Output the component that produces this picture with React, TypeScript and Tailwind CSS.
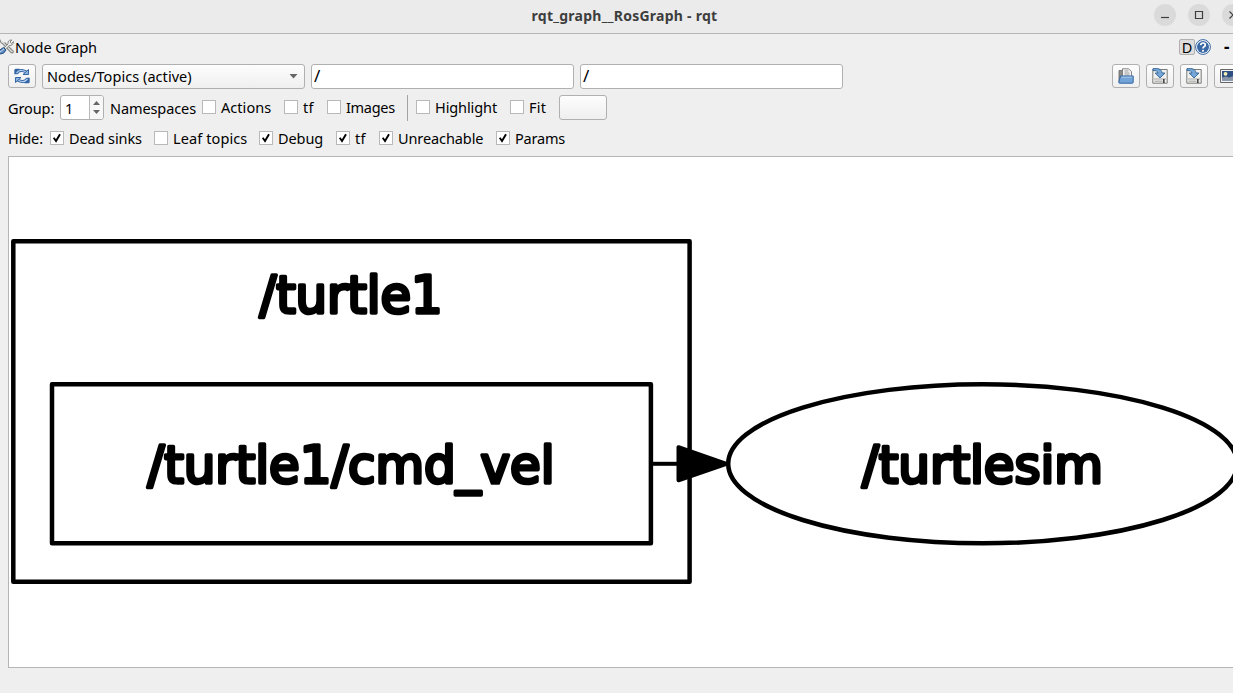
import clsx from "clsx";
import type { ReactNode } from "react";

function RefreshIcon() {
  return (
    <svg width="16" height="16" viewBox="0 0 16 16">
      <g fill="none" strokeLinejoin="round">
        <path d="M1.800 6.200V2.200H5.500M2.500 5.500Q4.500 2 8 2.500T13 4.500" stroke="#3465a4" strokeWidth="3" />
        <path d="M14.200 9.800V13.800H10.500M13.500 10.500Q11.500 14 8 13.500T3 11.500" stroke="#3465a4" strokeWidth="3" />
        <path d="M2.500 5Q5 2 8 2.500T13 4.500M13.500 11Q11 14 8 13.500T3 11.500" stroke="#b4d0ee" strokeWidth="1.200" />
        <path d="M9 6.500H14.500V1.500zM7 9.500H1.500V14.500z" fill="#8eb5df" stroke="#3465a4" />
      </g>
    </svg>
  );
}

function FolderIcon() {
  return (
    <svg width="16" height="16" viewBox="0 0 16 16">
      <path d="M1 14V2.500h4L6 4v10z" fill="#8a8d88" stroke="#666" strokeWidth=".8" />
      <path d="M4.500 9V.8h6L13.500 3.500V9z" fill="#f4f4f4" stroke="#777" strokeWidth=".9" />
      <path d="M6.500 3h4M6.500 5h5M6.500 7h5" stroke="#999" />
      <path d="M2.500 8h12.700v6.200q0 1-1 1H1.500q-.8 0-.7-1z" fill="#72a4d8" stroke="#3465a4" />
      <path d="M3.300 9.200h11" stroke="#a7c9ea" />
    </svg>
  );
}

function SaveIcon() {
  return (
    <svg width="16" height="16" viewBox="0 0 16 16">
      <path d="M.8 1.500h14.400v13.700H.8z" fill="#f1f1f0" stroke="#7a7c79" />
      <path d="M2 10.500h12v1H2z" fill="#a5a6a3" />
      <path d="M2.500 12.500h8v1.500h-8z" fill="#babdb6" />
      <path d="M11.200 11h1.300v4h-1.300z" fill="#222" />
      <path d="M1 .600C6 0 9.500 1 10 5h3L8 10 3.200 5H6C5.600 3 4 2.400 1 2.600z" fill="#75a7d8" stroke="#2f6193" strokeWidth=".9" strokeLinejoin="round" />
    </svg>
  );
}

function ImageIcon() {
  return (
    <svg width="16" height="16" viewBox="0 0 16 16">
      <path d="M.5 1.500h15v13H.5z" fill="#f3f3f3" stroke="#666" />
      <path d="M2 3h12v9.500H2z" fill="#2f4e82" />
      <path d="M2 9.500l4-1 3 1 5-1.500v4.500H2z" fill="#8795a6" />
      <circle cx="5.500" cy="5.800" r="1.900" fill="#f3efb2" />
    </svg>
  );
}

function ToolsIcon() {
  return (
    <svg width="14" height="16" viewBox="0 0 14 16" className="shrink-0">
      <path d="M0 .5q0 3 2.500 4L10.500 13q1.500 1.500 2.500.5T12 11L4.500 3.500" fill="#e6e6e6" stroke="#888a85" strokeWidth="1.100" />
      <path d="M13.500 2.500L11.500 4.500 10 3l2-2Q9 .5 8 3L8 5 3.500 9.500l1.300 1.300L9.300 6.500Q13 7 13.500 2.500z" fill="#eee" stroke="#888a85" />
      <path d="M-1 15V11.500L3.500 8.500 6 11Q4 15.500 0 15z" fill="#5c8ac0" stroke="#264f82" />
      <path d="M0 13l4-3" stroke="#c8dbef" />
    </svg>
  );
}

function HelpIcon() {
  return (
    <svg width="16" height="16" viewBox="0 0 16 16">
      <circle cx="8" cy="8" r="7.400" fill="#fff" stroke="#3465a4" />
      <circle cx="8" cy="8" r="6" fill="#3b69a5" />
      <path d="M5.700 6.100Q5.900 4 8.100 4q2.200 0 2.200 1.900Q10.300 7 9 7.700 8 8.300 8 9.500" fill="none" stroke="#fff" strokeWidth="1.700" />
      <circle cx="8" cy="11.800" r="1.050" fill="#fff" />
    </svg>
  );
}

function ToolButton({ children, className }: { children?: ReactNode; className?: string }) {
  return (
    <button
      className={clsx(
        "flex shrink-0 items-center justify-center rounded-[3px] border border-[#b0b0b0] bg-linear-to-b from-[#fdfdfd] to-[#efefef]",
        className ?? "h-6 w-7"
      )}
    >
      {children}
    </button>
  );
}

function CheckBox({ label, checked, className, text }: { label: string; checked?: boolean; className: string; text?: string }) {
  return (
    <label className={clsx("flex shrink-0 items-center gap-[5px]", className)}>
      <span className="flex h-3.5 w-3.5 shrink-0 items-center justify-center border border-[#b9b9b9] bg-white">
        {checked && (
          <svg width="10" height="10" viewBox="0 0 10 10" fill="none" stroke="#000" strokeWidth="1.900">
            <path d="M1.700 4.800L4 8 8 1.200" />
          </svg>
        )}
      </span>
      <span className={clsx("whitespace-nowrap", text)}>{label}</span>
    </label>
  );
}

function WindowButton({ children }: { children: ReactNode }) {
  return (
    <div className="flex h-[22px] w-[22px] shrink-0 items-center justify-center rounded-full bg-[#dadada]">
      <svg width="10" height="10" viewBox="0 0 10 10" fill="none" stroke="#3d3d3d" strokeWidth="1.200">
        {children}
      </svg>
    </div>
  );
}

function Graph() {
  return (
    <svg width="1224" height="510" viewBox="9 157 1224 510" className="block">
      <g fill="none" stroke="#000" strokeWidth="4.500" strokeLinejoin="round">
        <rect x="13.300" y="241.200" width="676.300" height="340.500" />
        <rect x="52" y="384.300" width="598.900" height="158.900" />
        <ellipse cx="982.700" cy="463.800" rx="254.500" ry="79.500" />
        <path d="M653 463.800H677" strokeWidth="4" />
        <path d="M678.500 447.200V480.300L726.500 463.800z" fill="#000" strokeWidth="4" />
      </g>
      <g
        fill="#000"
        stroke="#000"
        strokeWidth="3.600"
        strokeLinejoin="round"
        className="font-['DejaVu_Sans',sans-serif] text-[51px]"
      >
        <text x="259.500" y="312.500" textLength="183" lengthAdjust="spacingAndGlyphs">/turtle1</text>
        <text x="147.500" y="482.500" textLength="407" lengthAdjust="spacingAndGlyphs">/turtle1/cmd_vel</text>
        <text x="862" y="482.500" textLength="241" lengthAdjust="spacingAndGlyphs">/turtlesim</text>
      </g>
    </svg>
  );
}

export default function App() {
  return (
    <div className="flex h-[693px] w-[1233px] flex-col overflow-hidden bg-[#efefef] font-['Noto_Sans',sans-serif] text-[14.5px] leading-5 tracking-[-0.1px] text-black">
      {/* Title bar */}
      <div className="grid h-[34px] shrink-0 grid-cols-[1fr_250px_1fr] items-center border-b border-[#b6b6b6] bg-[#ebebeb] pb-[3px]">
        <div />
        <h1 className="pt-0.5 pl-4 text-[14px] font-bold tracking-[0.26px] whitespace-nowrap text-[#3d3d3d] text-center">
          rqt_graph__RosGraph - rqt
        </h1>
        <div className="flex justify-end gap-3 overflow-hidden">
          <WindowButton>
            <path d="M1 7.500H9" />
          </WindowButton>
          <WindowButton>
            <path d="M1.500 1.500h7v7h-7z" />
          </WindowButton>
          <div className="-mr-[11px] flex">
            <WindowButton>
              <path d="M1.500 1.500l7 7M8.500 1.500l-7 7" />
            </WindowButton>
          </div>
        </div>
      </div>

      {/* Dock title */}
      <div className="flex h-[26px] shrink-0 items-center">
        <ToolsIcon />
        <span className="ml-px">Node Graph</span>
        <div className="ml-auto flex items-center">
          <span className="flex h-4 w-4 items-center justify-center rounded-[2px] border border-[#b0b0b0] bg-[#dedede]">D</span>
          <HelpIcon />
          <span className="ml-[13px] w-[9px] text-[17px] font-bold">-</span>
        </div>
      </div>

      {/* Toolbar */}
      <div className="flex h-8 shrink-0 items-start pt-1 pl-2">
        <ToolButton>
          <RefreshIcon />
        </ToolButton>
        <div className="ml-1.5 flex h-[25px] w-[263px] shrink-0 items-center justify-between rounded-[3px] border border-[#b0b0b0] bg-linear-to-b from-[#fdfdfd] to-[#efefef] pr-1.5 pl-1">
          <span className="pb-0.5 tracking-[0.05px]">Nodes/Topics (active)</span>
          <svg width="9" height="5" viewBox="0 0 9 5">
            <path d="M.5 0h8L4.500 4.500z" fill="#666" />
          </svg>
        </div>
        <div className="ml-1.5 flex h-[25px] w-[263px] items-center rounded-[3px] border border-[#b0b0b0] bg-white pb-0.5 pl-0.5 text-[17px]">/</div>
        <div className="ml-1.5 flex h-[25px] w-[263px] items-center rounded-[3px] border border-[#b0b0b0] bg-white pb-0.5 pl-0.5 text-[17px]">/</div>
        <div className="-mr-[9px] ml-auto flex shrink-0 gap-1.5">
          <ToolButton>
            <FolderIcon />
          </ToolButton>
          <ToolButton>
            <SaveIcon />
          </ToolButton>
          <ToolButton>
            <SaveIcon />
          </ToolButton>
          <ToolButton>
            <ImageIcon />
          </ToolButton>
        </div>
      </div>

      {/* Grouping options */}
      <div className="flex h-[31px] shrink-0 items-center pl-2">
        <span className="w-[52px] shrink-0">Group:</span>
        <div className="flex h-[25px] w-11 shrink-0 overflow-hidden rounded-[3px] border border-[#b0b0b0] bg-white">
          <span className="flex-1 pt-0.5 pl-1">1</span>
          <span className="flex w-3.5 flex-col items-center justify-center gap-[5px] border-l border-[#b9b9b9] bg-[#f7f7f7]">
            <svg width="7" height="4" viewBox="0 0 7 4">
              <path d="M0 4H7L3.500 0z" fill="#666" />
            </svg>
            <svg width="7" height="4" viewBox="0 0 7 4">
              <path d="M0 0H7L3.500 4z" fill="#666" />
            </svg>
          </span>
        </div>
        <span className="ml-1.5 w-[92px] shrink-0">Namespaces</span>
        <div className="flex shrink-0 pb-[2px]">
          <CheckBox label="Actions" className="w-[82px]" text="tracking-[0.05px]" />
          <CheckBox label="tf" className="w-[43px]" text="tracking-[0.3px]" />
          <CheckBox label="Images" className="w-20" text="tracking-[-0.3px]" />
        </div>
        <div className="mr-2 h-[26px] w-px bg-[#a3a3a3]" />
        <div className="flex shrink-0 pb-[2px]">
          <CheckBox label="Highlight" className="w-[94px]" />
          <CheckBox label="Fit" className="w-[49px]" text="tracking-[0.3px]" />
        </div>
        <ToolButton className="h-[25px] w-12" />
      </div>

      {/* Hiding options */}
      <div className="flex h-8 shrink-0 items-center pb-[2px] pl-2">
        <span className="w-[42px] shrink-0">Hide:</span>
        <CheckBox label="Dead sinks" checked className="w-[104px]" />
        <CheckBox label="Leaf topics" className="w-[105px]" text="tracking-[0.1px]" />
        <CheckBox label="Debug" checked className="w-[77px]" />
        <CheckBox label="tf" checked className="w-[43px]" text="tracking-[0.3px]" />
        <CheckBox label="Unreachable" checked className="w-[117px]" />
        <CheckBox label="Params" checked className="w-20" text="tracking-[-0.2px]" />
      </div>

      {/* Graph view */}
      <div className="mt-px ml-2 h-[512px] shrink-0 overflow-hidden border-y border-l border-[#b5b5b5] bg-white">
        <Graph />
      </div>
    </div>
  );
}
